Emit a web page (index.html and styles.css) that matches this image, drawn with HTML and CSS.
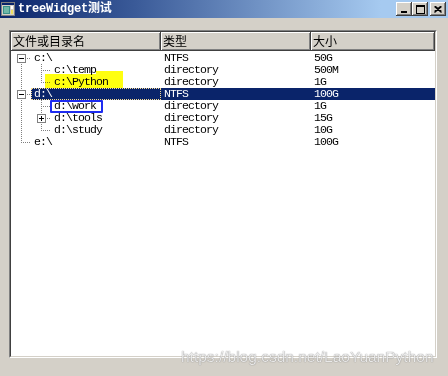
FILE: index.html
```html
<!DOCTYPE html>
<html>
<head>
<meta charset="utf-8">
<link rel="stylesheet" href="styles.css">
</head>
<body>
<div class="window">
  <div class="titlebar">
    <svg class="appicon" width="14" height="14" viewBox="0 0 14 14">
      <rect x="0.5" y="0.5" width="13" height="13" fill="#d4d0c8" stroke="#808080"/>
      <rect x="1" y="1" width="12" height="2" fill="#0a246a"/>
      <rect x="2" y="4" width="7" height="8" fill="#3a8f8a"/>
      <rect x="3" y="5" width="5" height="6" fill="#6fb8a8"/>
      <rect x="10" y="4" width="2" height="3" fill="#ffffff"/>
      <rect x="10" y="8" width="2" height="4" fill="#f0e060"/>
    </svg>
    <span class="title">treeWidget测试</span>
    <div class="caption-buttons">
      <div class="cbtn">
        <svg width="8" height="7" viewBox="0 0 8 7"><rect x="1" y="5" width="6" height="2" fill="#000"/></svg>
      </div>
      <div class="cbtn">
        <svg width="9" height="9" viewBox="0 0 9 9"><rect x="0.5" y="0.5" width="8" height="8" fill="none" stroke="#000"/><rect x="0" y="0" width="9" height="2" fill="#000"/></svg>
      </div>
      <div class="cbtn gap">
        <svg width="8" height="7" viewBox="0 0 8 7"><path d="M0.5 0.5 L7.5 6.5 M7.5 0.5 L0.5 6.5 M1.5 0.5 L7.5 5.5 M6.5 0.5 L0.5 5.5" stroke="#000" stroke-width="1.2" fill="none"/></svg>
      </div>
    </div>
  </div>

  <div class="client">
    <div class="tree">
      <div class="tree-inner">
        <div class="header">
          <div class="hcell c0">文件或目录名</div>
          <div class="hcell c1">类型</div>
          <div class="hcell c2">大小</div>
        </div>
        <div class="rows">
          <div class="row">
            <div class="cell c0"><span class="br first"><span class="box minus"></span></span><span class="label">c:\</span></div>
            <div class="cell c1">NTFS</div>
            <div class="cell c2">50G</div>
          </div>
          <div class="row">
            <div class="cell c0"><span class="br guide"></span><span class="br mid"></span><span class="label">c:\temp</span></div>
            <div class="cell c1">directory</div>
            <div class="cell c2">500M</div>
          </div>
          <div class="row">
            <div class="cell c0"><span class="br guide"></span><span class="br last"></span><span class="label">c:\Python</span></div>
            <div class="cell c1">directory</div>
            <div class="cell c2">1G</div>
          </div>
          <div class="row selected">
            <div class="cell c0"><span class="br mid"><span class="box minus"></span></span><span class="label focus">d:\</span></div>
            <div class="cell c1">NTFS</div>
            <div class="cell c2">100G</div>
          </div>
          <div class="row">
            <div class="cell c0"><span class="br guide"></span><span class="br mid"></span><span class="label">d:\work</span></div>
            <div class="cell c1">directory</div>
            <div class="cell c2">1G</div>
          </div>
          <div class="row">
            <div class="cell c0"><span class="br guide"></span><span class="br mid"><span class="box plus"></span></span><span class="label">d:\tools</span></div>
            <div class="cell c1">directory</div>
            <div class="cell c2">15G</div>
          </div>
          <div class="row">
            <div class="cell c0"><span class="br guide"></span><span class="br last"></span><span class="label">d:\study</span></div>
            <div class="cell c1">directory</div>
            <div class="cell c2">10G</div>
          </div>
          <div class="row">
            <div class="cell c0"><span class="br last"></span><span class="label">e:\</span></div>
            <div class="cell c1">NTFS</div>
            <div class="cell c2">100G</div>
          </div>
        </div>
      </div>
    </div>
  </div>

  <div class="mark-yellow ya"></div>
  <div class="mark-yellow yb"></div>
  <div class="mark-blue"></div>
  <div class="watermark">https://blog.csdn.net/LaoYuanPython</div>
</div>
</body>
</html>
```

FILE: styles.css
```css
* { box-sizing: border-box; }
html, body { margin: 0; padding: 0; }
body {
  background: #d4d0c8;
  font-family: "Liberation Mono", "Noto Sans CJK SC", monospace;
}
.window {
  position: relative;
  width: 448px;
  height: 376px;
  background: #d4d0c8;
  overflow: hidden;
}
.titlebar {
  height: 18px;
  display: flex;
  align-items: center;
  padding-left: 1px;
  padding-right: 2px;
  background: linear-gradient(to right, #0a246a 0%, #3a5a98 30%, #a6caf0 85%, #a6caf0 100%);
}
.appicon { display: block; flex: none; }
.title {
  margin-left: 3px;
  color: #fff;
  font-weight: bold;
  font-size: 12px;
  line-height: 14px;
  font-family: "Liberation Mono", "Noto Sans CJK SC", monospace;
  letter-spacing: -0.2px;
}
.caption-buttons {
  margin-left: auto;
  display: flex;
  align-items: center;
}
.cbtn {
  width: 16px;
  height: 14px;
  background: #d4d0c8;
  box-shadow: inset -1px -1px #404040, inset 1px 1px #ffffff, inset -2px -2px #808080, inset 2px 2px #d4d0c8;
  display: flex;
  align-items: center;
  justify-content: center;
}
.cbtn svg { display: block; }
.cbtn.gap { margin-left: 2px; }

.client {
  padding: 12px 11px 18px 9px;
}
.tree {
  height: 328px;
  border: 1px solid;
  border-color: #808080 #ffffff #ffffff #808080;
}
.tree-inner {
  height: 100%;
  border: 1px solid;
  border-color: #404040 #d4d0c8 #d4d0c8 #404040;
  background: #ffffff;
  overflow: hidden;
}
.header {
  display: flex;
  height: 19px;
}
.hcell {
  height: 19px;
  background: #d4d0c8;
  border-right: 1px solid #404040;
  border-bottom: 1px solid #404040;
  box-shadow: inset 1px 1px #ffffff, inset -1px -1px #808080;
  font-family: "Noto Sans CJK SC", sans-serif;
  font-size: 12px;
  line-height: 18px;
  padding-left: 2px;
  color: #000;
  white-space: nowrap;
}
.hcell.c0 { width: 150px; }
.hcell.c1 { width: 150px; }
.hcell.c2 { flex: 1; }

.rows { padding-top: 1px; }
.row {
  display: flex;
  height: 12px;
  font-size: 11.5px;
  line-height: 12px;
  letter-spacing: -0.9px;
  color: #000;
  white-space: nowrap;
}
.cell { height: 12px; }
.cell.c0 { width: 150px; display: flex; }
.cell.c1 { width: 150px; padding-left: 3px; }
.cell.c2 { flex: 1; padding-left: 3px; }
.label { flex: 1; padding-left: 3px; height: 12px; }

.row.selected .label,
.row.selected .c1,
.row.selected .c2 {
  background: #0a246a;
  color: #ffffff;
}
.label.focus { outline: 1px dotted #f5db95; outline-offset: -1px; }

.br {
  position: relative;
  flex: none;
  width: 20px;
  height: 12px;
}
.br::before, .br::after {
  content: "";
  position: absolute;
}
.br.guide::before,
.br.mid::before {
  left: 10px; top: 0; width: 1px; height: 12px;
  background: linear-gradient(to bottom, #808080 50%, transparent 50%);
  background-size: 1px 2px;
}
.br.last::before {
  left: 10px; top: 0; width: 1px; height: 7px;
  background: linear-gradient(to bottom, #808080 50%, transparent 50%);
  background-size: 1px 2px;
}
.br.first::before {
  left: 10px; top: 6px; width: 1px; height: 6px;
  background: linear-gradient(to bottom, #808080 50%, transparent 50%);
  background-size: 1px 2px;
}
.br.mid::after,
.br.last::after,
.br.first::after {
  left: 10px; top: 6px; width: 10px; height: 1px;
  background: linear-gradient(to right, #808080 50%, transparent 50%);
  background-size: 2px 1px;
}
.box {
  position: absolute;
  z-index: 1;
  left: 6px;
  top: 2px;
  width: 9px;
  height: 9px;
  border: 1px solid #808080;
  background: #ffffff;
}
.box::before {
  content: "";
  position: absolute;
  left: 1px; top: 3px; width: 5px; height: 1px;
  background: #000;
}
.box.plus::after {
  content: "";
  position: absolute;
  left: 3px; top: 1px; width: 1px; height: 5px;
  background: #000;
}

.mark-yellow {
  position: absolute;
  background: #ffff10;
  mix-blend-mode: multiply;
}
.mark-yellow.ya { left: 45px; top: 74px; width: 78px; height: 14px; }
.mark-yellow.yb { left: 96px; top: 71px; width: 27px; height: 3px; }
.mark-blue {
  position: absolute;
  left: 50px;
  top: 100px;
  width: 53px;
  height: 13px;
  border: 2px solid #1e2cf0;
  border-radius: 1px;
}
.watermark {
  position: absolute;
  left: 181px;
  top: 348px;
  font-family: "Liberation Sans", Arial, sans-serif;
  font-size: 15.5px;
  line-height: 18px;
  color: rgba(255, 255, 255, 0.85);
  text-shadow: 0 0 1px rgba(70, 70, 70, 0.9);
  white-space: nowrap;
}
```
